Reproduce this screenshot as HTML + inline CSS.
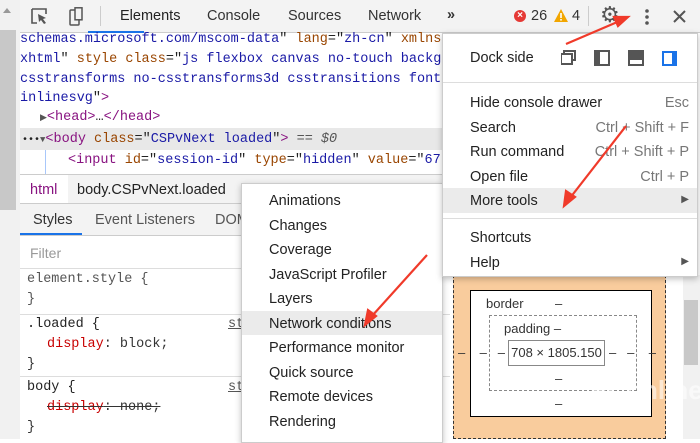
<!DOCTYPE html>
<html><head><style>
*{margin:0;padding:0;box-sizing:border-box}
body{width:700px;height:439px;overflow:hidden;background:#fff;font-family:"Liberation Sans",sans-serif;position:relative;color:#333}
.a{position:absolute;white-space:nowrap}
.mono{font-family:"Liberation Mono",monospace;font-size:13.5px}
.s{font-size:14.5px;color:#333}
.tag{color:#881280}.at{color:#994500}.av{color:#1a1aa6}.pu{color:#222}
.mi{position:absolute;left:27px;font-size:14.5px;color:#222}
.sc{position:absolute;right:8px;font-size:14.5px;color:#777}
</style></head><body>
<div class="a" style="left:0;top:0;width:20px;height:439px;background:#f1f1f1"></div>
<div class="a" style="left:0;top:30px;width:16px;height:180px;background:#c8c8c8"></div>
<div class="a" style="left:3px;top:8px;width:0;height:0;border-left:4px solid transparent;border-right:4px solid transparent;border-bottom:5px solid #999"></div>
<div class="a" style="left:683px;top:275px;width:17px;height:164px;background:#f1f1f1"></div>
<div class="a" style="left:684px;top:300px;width:14px;height:65px;background:#c8c8c8"></div>
<div class="a" style="left:20px;top:0;width:680px;height:33px;background:#f3f3f3;border-bottom:1px solid #ccc"></div>
<svg class="a" style="left:30px;top:7px" width="60" height="20"><path d="M2 2h14v5M2 2v14h5" stroke="#555" stroke-width="1.6" fill="none"/><path d="M8 7l8 4-3 1 3 4-2 1-3-4-2 2z" fill="#555"/><rect x="40" y="3" width="9" height="15" rx="1" stroke="#555" stroke-width="1.5" fill="none"/><rect x="45" y="0.8" width="7" height="12" stroke="#555" stroke-width="1.5" fill="#f3f3f3"/></svg>
<div class="a" style="left:100px;top:6px;width:1px;height:20px;background:#ccc"></div>
<div class="a s" style="left:120px;top:8px;color:#222">Elements</div>
<div class="a" style="left:88px;top:31px;width:56px;height:2px;background:#1a73e8"></div>
<div class="a s" style="left:207px;top:8px">Console</div>
<div class="a s" style="left:288px;top:8px">Sources</div>
<div class="a s" style="left:368px;top:8px">Network</div>
<div class="a s" style="left:447px;top:7px;font-weight:bold">»</div>
<div class="a" style="left:514px;top:10px;width:12px;height:12px;border-radius:50%;background:#e53935;color:#fff;font-size:10px;line-height:12px;text-align:center;font-weight:bold">×</div>
<div class="a s" style="left:531px;top:8px">26</div>
<svg class="a" style="left:554px;top:9px" width="14" height="13"><path d="M7 0L14 13H0z" fill="#f2a600"/><rect x="6.2" y="4" width="1.6" height="5" fill="#fff"/><rect x="6.2" y="10" width="1.6" height="1.6" fill="#fff"/></svg>
<div class="a s" style="left:572px;top:8px">4</div>
<div class="a" style="left:588px;top:6px;width:1px;height:20px;background:#ccc"></div>
<div class="a" style="left:600px;top:2px;font-size:22px;color:#555">⚙</div>
<svg class="a" style="left:644px;top:8px" width="6" height="18"><circle cx="3" cy="3" r="1.8" fill="#555"/><circle cx="3" cy="9" r="1.8" fill="#555"/><circle cx="3" cy="15" r="1.8" fill="#555"/></svg>
<svg class="a" style="left:673px;top:10px" width="13" height="13"><path d="M1 1l11 11M12 1L1 12" stroke="#555" stroke-width="2"/></svg>
<div class="a" style="left:20px;top:128px;width:430px;height:22px;background:#e8e8e8"></div>
<div class="a" style="left:45px;top:150px;width:1px;height:24px;background:#a8c7fa"></div>
<div class="a mono av" style="left:20px;top:32px">schemas.microsoft.com/mscom-data<span class="pu">"</span> <span class="at">lang</span><span class="pu">="</span>zh-cn<span class="pu">"</span> <span class="at">xmlns</span></div>
<div class="a mono av" style="left:20px;top:52px">xhtml<span class="pu">"</span> <span class="at">style class</span><span class="pu">="</span>js flexbox canvas no-touch backg</div>
<div class="a mono av" style="left:20px;top:72px">csstransforms no-csstransforms3d csstransitions font</div>
<div class="a mono av" style="left:20px;top:91px">inlinesvg<span class="pu">"</span><span class="tag">&gt;</span></div>
<div class="a mono tag" style="left:40px;top:110px"><span style="font-size:9px;color:#555">▶</span>&lt;head&gt;<span class="pu">…</span>&lt;/head&gt;</div>
<div class="a mono tag" style="left:22px;top:132px"><span class="pu" style="font-size:10px">•••</span><span style="font-size:9px;color:#555">▼</span>&lt;body <span class="at">class</span><span class="pu">="</span><span class="av">CSPvNext loaded</span><span class="pu">"</span>&gt; <span style="color:#555;font-style:italic">== $0</span></div>
<div class="a mono tag" style="left:68px;top:153px">&lt;input <span class="at">id</span><span class="pu">="</span><span class="av">session-id</span><span class="pu">"</span> <span class="at">type</span><span class="pu">="</span><span class="av">hidden</span><span class="pu">"</span> <span class="at">value</span><span class="pu">="</span><span class="av">67</span></div>
<div class="a" style="left:20px;top:174px;width:430px;height:30px;background:#f3f3f3;border-top:1px solid #ccc;border-bottom:1px solid #ccc"></div>
<div class="a" style="left:20px;top:175px;width:48px;height:28px;background:#fff"></div>
<div class="a s" style="left:30px;top:182px;color:#881280">html</div>
<div class="a s" style="left:77px;top:182px;color:#222">body.CSPvNext.loaded</div>
<div class="a" style="left:20px;top:204px;width:430px;height:32px;background:#f3f3f3;border-bottom:1px solid #ccc"></div>
<div class="a s" style="left:33px;top:212px">Styles</div>
<div class="a" style="left:20px;top:233px;width:62px;height:2px;background:#1a73e8"></div>
<div class="a s" style="left:95px;top:212px;color:#555">Event Listeners</div>
<div class="a s" style="left:215px;top:212px;color:#555">DOM</div>
<div class="a s" style="left:30px;top:245px;color:#999;font-size:14px">Filter</div>
<div class="a" style="left:20px;top:268px;width:430px;height:1px;background:#ddd"></div>
<div class="a mono" style="left:27px;top:272px;color:#555">element.style {</div>
<div class="a mono" style="left:27px;top:292px;color:#555">}</div>
<div class="a" style="left:20px;top:314px;width:430px;height:1px;background:#ddd"></div>
<div class="a mono" style="left:27px;top:317px;color:#222">.loaded {</div>
<div class="a mono" style="left:47px;top:337px"><span style="color:#c80000">display</span>: block;</div>
<div class="a mono" style="left:27px;top:357px">}</div>
<div class="a" style="left:20px;top:376px;width:430px;height:1px;background:#ddd"></div>
<div class="a mono" style="left:27px;top:380px;color:#222">body {</div>
<div class="a mono" style="left:47px;top:400px;text-decoration:line-through"><span style="color:#c80000">display</span>: none;</div>
<div class="a mono" style="left:27px;top:420px">}</div>
<div class="a mono" style="left:228px;top:317px;text-decoration:underline;color:#555">st</div>
<div class="a mono" style="left:228px;top:380px;text-decoration:underline;color:#555">st</div>
<div class="a" style="left:453px;top:270px;width:213px;height:169px;background:#f9cc9d;border:1px dashed #333"></div>
<div class="a" style="left:470px;top:290px;width:182px;height:127px;background:#fff;border:1.5px solid #000"></div>
<div class="a" style="left:489px;top:315px;width:148px;height:76px;border:1px dashed #888"></div>
<div class="a" style="left:508px;top:340px;width:97px;height:26px;border:1px solid #888;font-size:13px;text-align:center;line-height:24px">708 × 1805.150</div>
<div class="a" style="left:486px;top:296px;font-size:13px">border</div>
<div class="a" style="left:504px;top:321px;font-size:13px">padding –</div>
<div class="a" style="left:555px;top:296px;font-size:13px">–</div>
<div class="a" style="left:555px;top:371px;font-size:13px">–</div>
<div class="a" style="left:555px;top:396px;font-size:13px">–</div>
<div class="a" style="left:458px;top:345px;font-size:13px">–&nbsp;&nbsp;&nbsp; –&nbsp;&nbsp; –</div>
<div class="a" style="left:609px;top:345px;font-size:13px">–&nbsp;&nbsp; –&nbsp;&nbsp;&nbsp; –</div>
<div class="a" style="left:590px;top:375px;font-size:26px;color:rgba(255,255,255,.55);font-weight:bold">PConline</div>
<div class="a" style="left:241px;top:183px;width:202px;height:260px;background:#fff;border:1px solid #ccc;box-shadow:0 2px 6px rgba(0,0,0,.25)">
<div class="a" style="left:0;top:127px;width:200px;height:24px;background:#ebebeb"></div>
<div class="mi" style="top:9px">Animations</div>
<div class="mi" style="top:34px">Changes</div>
<div class="mi" style="top:58px">Coverage</div>
<div class="mi" style="top:83px">JavaScript Profiler</div>
<div class="mi" style="top:107px">Layers</div>
<div class="mi" style="top:132px">Network conditions</div>
<div class="mi" style="top:156px">Performance monitor</div>
<div class="mi" style="top:181px">Quick source</div>
<div class="mi" style="top:205px">Remote devices</div>
<div class="mi" style="top:230px">Rendering</div>
</div>
<div class="a" style="left:442px;top:33px;width:256px;height:244px;background:#fff;border:1px solid #ccc;box-shadow:0 2px 6px rgba(0,0,0,.25)">
<div class="mi" style="top:16px">Dock side</div>
<svg class="a" style="left:118px;top:16px" width="120" height="16"><rect x="3" y="1" width="11" height="9" fill="none" stroke="#555" stroke-width="2"/><rect x="0" y="4" width="11" height="10" fill="#fff" stroke="#555" stroke-width="2"/><rect x="34" y="1" width="14" height="14" fill="none" stroke="#555" stroke-width="2"/><rect x="34" y="1" width="5" height="14" fill="#555"/><rect x="68" y="1" width="14" height="14" fill="none" stroke="#555" stroke-width="2"/><rect x="68" y="1" width="14" height="9" fill="#555"/><rect x="101" y="1" width="15" height="15" fill="#1a73e8"/><rect x="103" y="3" width="8" height="11" fill="#fff"/></svg>
<div class="a" style="left:0;top:48px;width:254px;height:1px;background:#ddd"></div>
<div class="mi" style="top:61px">Hide console drawer</div><div class="sc" style="top:61px">Esc</div>
<div class="mi" style="top:86px">Search</div><div class="sc" style="top:86px">Ctrl + Shift + F</div>
<div class="mi" style="top:110px">Run command</div><div class="sc" style="top:110px">Ctrl + Shift + P</div>
<div class="mi" style="top:135px">Open file</div><div class="sc" style="top:135px">Ctrl + P</div>
<div class="a" style="left:0;top:154px;width:254px;height:25px;background:#ebebeb"></div>
<div class="mi" style="top:159px">More tools</div><div class="sc" style="top:160px;font-size:10px;color:#555">▶</div>
<div class="a" style="left:0;top:184px;width:254px;height:1px;background:#ddd"></div>
<div class="mi" style="top:196px">Shortcuts</div>
<div class="mi" style="top:221px">Help</div><div class="sc" style="top:222px;font-size:10px;color:#555">▶</div>
</div>
<svg class="a" style="left:0;top:0" width="700" height="439">
<g stroke="#f03a2a" stroke-width="2.2" fill="#f03a2a">
<line x1="566" y1="44" x2="622" y2="20"/><path d="M628 17l-14 0 4 9z"/>
<line x1="626" y1="126" x2="570" y2="198"/><path d="M564 206l2-15 9 6z"/>
<line x1="427" y1="255" x2="372" y2="316"/><path d="M365 325l3-15 8 6z"/>
</g></svg>
</body></html>
